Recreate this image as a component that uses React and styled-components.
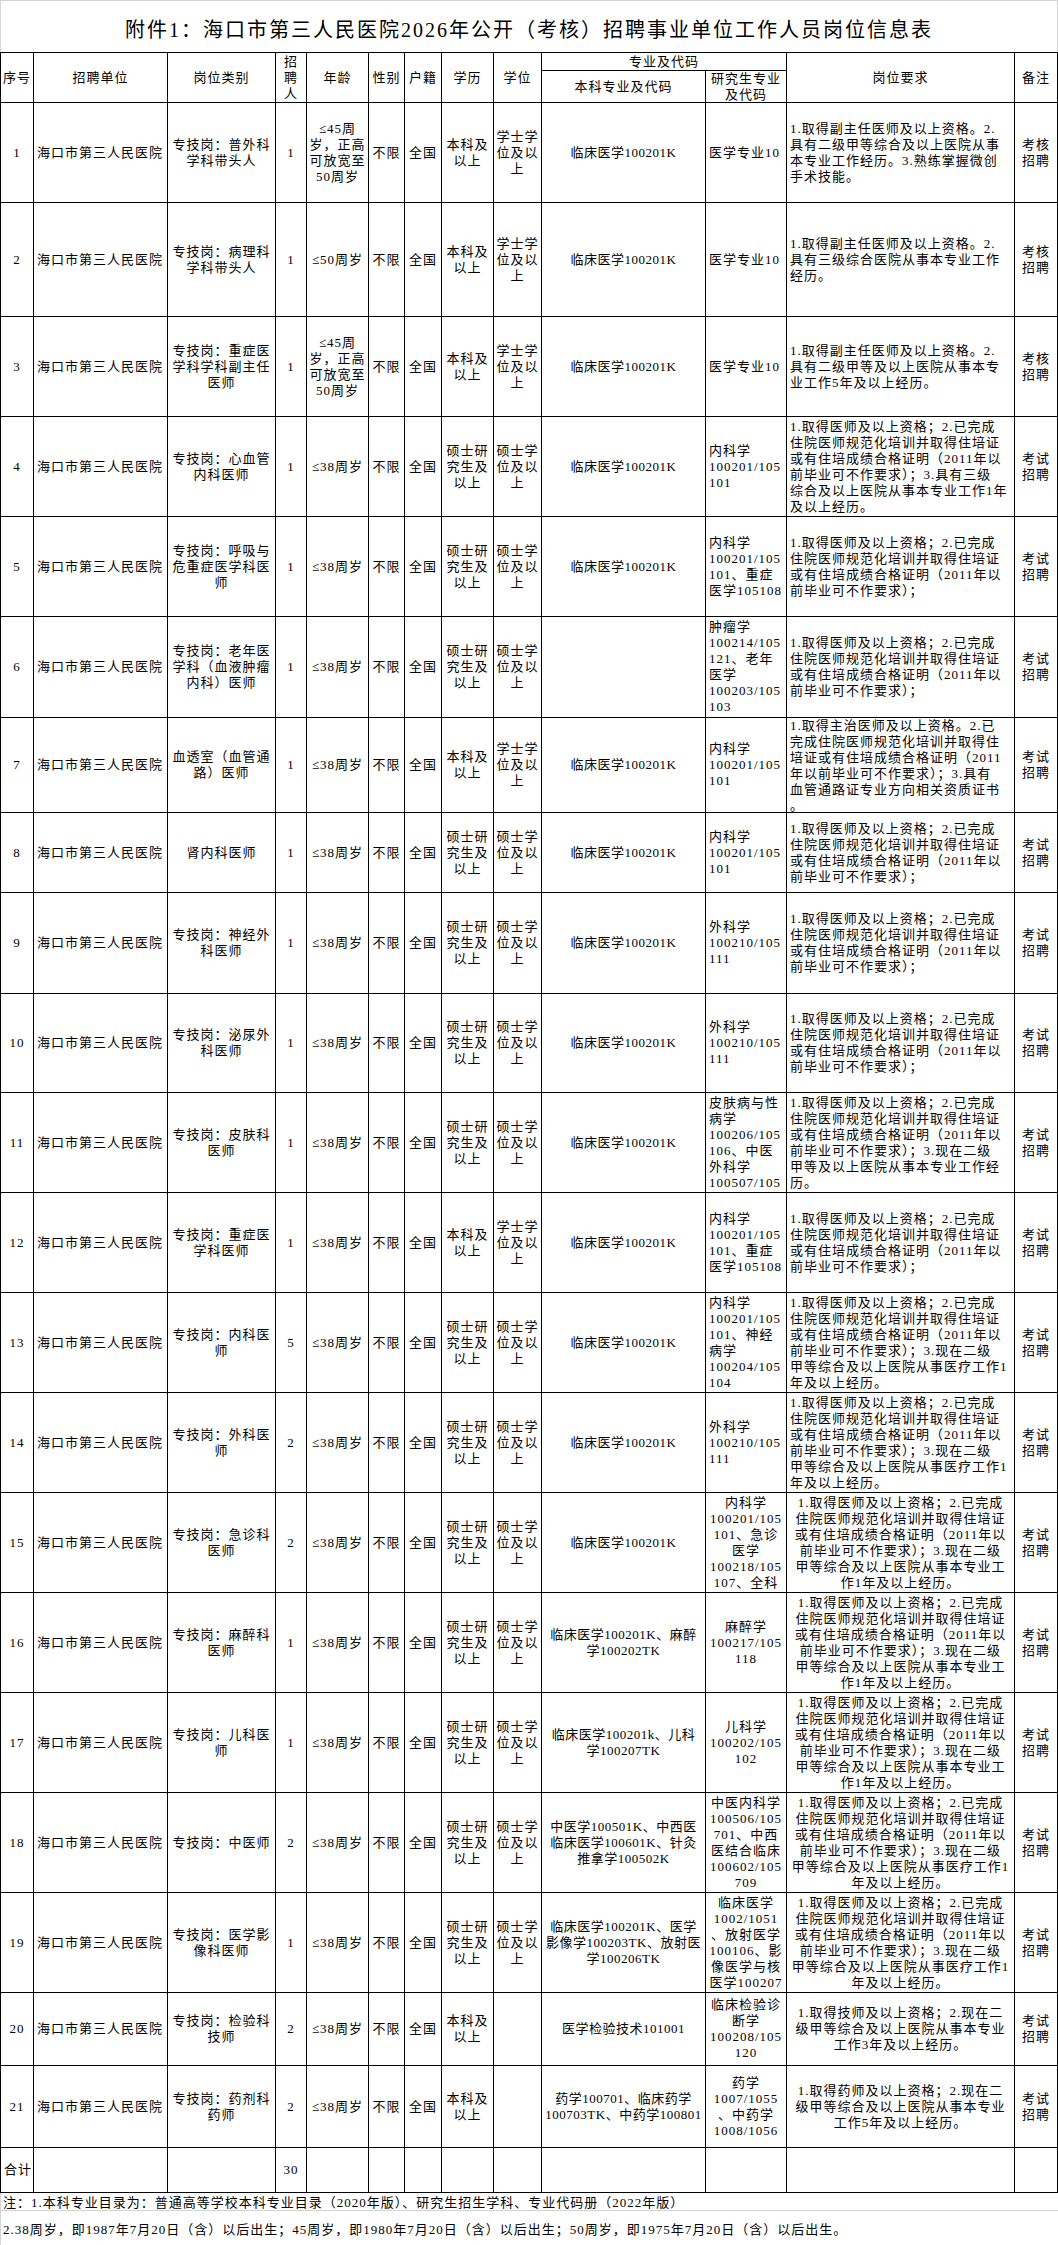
import React from 'react';
import styled, { createGlobalStyle } from 'styled-components';

const COLS = [33, 134, 108, 31, 62, 36, 37, 52, 48, 164, 81, 228, 43];

const GlobalStyle = createGlobalStyle`
  html, body {
    margin: 0;
    padding: 0;
    background: #fff;
  }
  body {
    width: 1058px;
    font-family: "Liberation Serif", "Noto Sans CJK SC", serif;
    color: #000;
  }
`;

const Page = styled.div`
  width: 1058px;
`;

const Title = styled.div`
  height: 52px;
  box-sizing: border-box;
  border: 1px solid #d4d4d4;
  border-bottom: none;
  display: flex;
  align-items: center;
  justify-content: center;
  padding-top: 4px;
  font-size: 20px;
  letter-spacing: 2px;
  white-space: nowrap;
`;

const Sheet = styled.div`
  display: grid;
  grid-template-columns: ${COLS.map(w => w + 'px').join(' ')};
  grid-template-rows: ${p => p.$rows};
  border-left: 1px solid #000;
  border-top: 1px solid #000;
`;

const Cell = styled.div`
  grid-row: span ${p => p.$rs || 1};
  grid-column: span ${p => p.$cs || 1};
  min-width: 0;
  min-height: 0;
  border-right: 1px solid #000;
  border-bottom: 1px solid #000;
  display: flex;
  flex-direction: column;
  justify-content: safe center;
  overflow: hidden;
  white-space: pre;
  text-align: ${p => (p.$left ? 'left' : 'center')};
  padding: 0 1px 0 ${p => (p.$left ? 3 : 1)}px;
  font-size: 13px;
  letter-spacing: ${p => (p.$tight ? 0.5 : 1)}px;
  line-height: 16px;
`;

const Note = styled.div`
  height: ${p => p.$h}px;
  box-sizing: border-box;
  border-left: 1px solid #d4d4d4;
  border-bottom: 1px solid #d4d4d4;
  display: flex;
  align-items: center;
  padding-left: 2px;
  font-size: 13px;
  letter-spacing: 1px;
  white-space: nowrap;
`;

const U = '海口市第三人民医院';
const MS = ['硕士研\n究生及\n以上', '硕士学\n位及以\n上'];
const BK = ['本科及\n以上', '学士学\n位及以\n上'];
const LC = '临床医学100201K';
const P3 = '1.取得医师及以上资格；2.已完成\n住院医师规范化培训并取得住培证\n或有住培成绩合格证明（2011年以\n';
const REQ_A = P3 + '前毕业可不作要求）；';
const REQ_MED = P3 + '前毕业可不作要求）；3.现在二级\n甲等综合及以上医院从事医疗工作1\n年及以上经历。';
const REQ_PRO = P3 + '前毕业可不作要求）；3.现在二级\n甲等综合及以上医院从事本专业工\n作1年及以上经历。';
const KS = '考试\n招聘';
const KH = '考核\n招聘';

// no, post, num, age, edu, degree, ug, pg, req, note, height, centered tail
const rows = [
  ['1', '专技岗：普外科\n学科带头人', '1', '≤45周\n岁，正高\n可放宽至\n50周岁', ...BK, LC, '医学专业10',
    '1.取得副主任医师及以上资格。2.\n具有二级甲等综合及以上医院从事\n本专业工作经历。3.熟练掌握微创\n手术技能。', KH, 100],
  ['2', '专技岗：病理科\n学科带头人', '1', '≤50周岁', ...BK, LC, '医学专业10',
    '1.取得副主任医师及以上资格。2.\n具有三级综合医院从事本专业工作\n经历。', KH, 114],
  ['3', '专技岗：重症医\n学科学科副主任\n医师', '1', '≤45周\n岁，正高\n可放宽至\n50周岁', ...BK, LC, '医学专业10',
    '1.取得副主任医师及以上资格。2.\n具有二级甲等及以上医院从事本专\n业工作5年及以上经历。', KH, 100],
  ['4', '专技岗：心血管\n内科医师', '1', '≤38周岁', ...MS, LC, '内科学\n100201/105\n101',
    P3 + '前毕业可不作要求）；3.具有三级\n综合及以上医院从事本专业工作1年\n及以上经历。', KS, 100],
  ['5', '专技岗：呼吸与\n危重症医学科医\n师', '1', '≤38周岁', ...MS, LC, '内科学\n100201/105\n101、重症\n医学105108', REQ_A, KS, 100],
  ['6', '专技岗：老年医\n学科（血液肿瘤\n内科）医师', '1', '≤38周岁', ...MS, '', '肿瘤学\n100214/105\n121、老年\n医学\n100203/105\n103', REQ_A, KS, 101],
  ['7', '血透室（血管通\n路）医师', '1', '≤38周岁', ...BK, LC, '内科学\n100201/105\n101',
    '1.取得主治医师及以上资格。2.已\n完成住院医师规范化培训并取得住\n培证或有住培成绩合格证明（2011\n年以前毕业可不作要求）；3.具有\n血管通路证专业方向相关资质证书\n。', KS, 95],
  ['8', '肾内科医师', '1', '≤38周岁', ...MS, LC, '内科学\n100201/105\n101', REQ_A, KS, 80],
  ['9', '专技岗：神经外\n科医师', '1', '≤38周岁', ...MS, LC, '外科学\n100210/105\n111', REQ_A, KS, 101],
  ['10', '专技岗：泌尿外\n科医师', '1', '≤38周岁', ...MS, LC, '外科学\n100210/105\n111', REQ_A, KS, 99],
  ['11', '专技岗：皮肤科\n医师', '1', '≤38周岁', ...MS, LC, '皮肤病与性\n病学\n100206/105\n106、中医\n外科学\n100507/105',
    P3 + '前毕业可不作要求）；3.现在二级\n甲等及以上医院从事本专业工作经\n历。', KS, 100],
  ['12', '专技岗：重症医\n学科医师', '1', '≤38周岁', ...BK, LC, '内科学\n100201/105\n101、重症\n医学105108', REQ_A, KS, 100],
  ['13', '专技岗：内科医\n师', '5', '≤38周岁', ...MS, LC, '内科学\n100201/105\n101、神经\n病学\n100204/105\n104', REQ_MED, KS, 100],
  ['14', '专技岗：外科医\n师', '2', '≤38周岁', ...MS, LC, '外科学\n100210/105\n111', REQ_MED, KS, 100],
  ['15', '专技岗：急诊科\n医师', '2', '≤38周岁', ...MS, LC, '内科学\n100201/105\n101、急诊\n医学\n100218/105\n107、全科', REQ_PRO, KS, 100, true],
  ['16', '专技岗：麻醉科\n医师', '1', '≤38周岁', ...MS, '临床医学100201K、麻醉\n学100202TK', '麻醉学\n100217/105\n118', REQ_PRO, KS, 100, true],
  ['17', '专技岗：儿科医\n师', '1', '≤38周岁', ...MS, '临床医学100201k、儿科\n学100207TK', '儿科学\n100202/105\n102', REQ_PRO, KS, 100, true],
  ['18', '专技岗：中医师', '2', '≤38周岁', ...MS, '中医学100501K、中西医\n临床医学100601K、针灸\n推拿学100502K', '中医内科学\n100506/105\n701、中西\n医结合临床\n100602/105\n709', REQ_MED, KS, 100, true],
  ['19', '专技岗：医学影\n像科医师', '1', '≤38周岁', ...MS, '临床医学100201K、医学\n影像学100203TK、放射医\n学100206TK', '临床医学\n1002/1051\n、放射医学\n100106、影\n像医学与核\n医学100207', REQ_MED, KS, 100, true],
  ['20', '专技岗：检验科\n技师', '2', '≤38周岁', '本科及\n以上', '', '医学检验技术101001', '临床检验诊\n断学\n100208/105\n120',
    '1.取得技师及以上资格；2.现在二\n级甲等综合及以上医院从事本专业\n工作3年及以上经历。', KS, 73, true],
  ['21', '专技岗：药剂科\n药师', '2', '≤38周岁', '本科及\n以上', '', '药学100701、临床药学\n100703TK、中药学100801', '药学\n1007/1055\n、中药学\n1008/1056',
    '1.取得药师及以上资格；2.现在二\n级甲等综合及以上医院从事本专业\n工作5年及以上经历。', KS, 82, true],
];

const heads = ['序号', '招聘单位', '岗位类别', '招\n聘\n人', '年龄', '性别', '户籍', '学历', '学位'];

const App = () => {
  const template = ['18px', '32px', ...rows.map(r => r[10] + 'px'), '45px'].join(' ');

  return (
    <Page>
      <GlobalStyle />
      <Title>附件1：海口市第三人民医院2026年公开（考核）招聘事业单位工作人员岗位信息表</Title>
      <Sheet $rows={template}>
        {heads.map(t => (
          <Cell key={t} $rs={2}>{t}</Cell>
        ))}
        <Cell $cs={2}>专业及代码</Cell>
        <Cell $rs={2}>岗位要求</Cell>
        <Cell $rs={2}>备注</Cell>
        <Cell>本科专业及代码</Cell>
        <Cell>{'研究生专业\n及代码'}</Cell>

        {rows.map(([no, post, num, age, edu, deg, ug, pg, req, note, , center]) => (
          <React.Fragment key={no}>
            <Cell>{no}</Cell>
            <Cell $left>{U}</Cell>
            <Cell>{post}</Cell>
            <Cell>{num}</Cell>
            <Cell>{age}</Cell>
            <Cell>不限</Cell>
            <Cell>全国</Cell>
            <Cell>{edu}</Cell>
            <Cell>{deg}</Cell>
            <Cell $tight>{ug}</Cell>
            <Cell $left={!center}>{pg}</Cell>
            <Cell $left={!center}>{req}</Cell>
            <Cell>{note}</Cell>
          </React.Fragment>
        ))}

        <Cell $left>合计</Cell>
        <Cell />
        <Cell />
        <Cell>30</Cell>
        {Array.from({ length: 9 }, (_, i) => (
          <Cell key={'t' + i} />
        ))}
      </Sheet>
      <Note $h={18}>注：1.本科专业目录为：普通高等学校本科专业目录（2020年版）、研究生招生学科、专业代码册（2022年版）</Note>
      <Note $h={35}>2.38周岁，即1987年7月20日（含）以后出生；45周岁，即1980年7月20日（含）以后出生；50周岁，即1975年7月20日（含）以后出生。</Note>
    </Page>
  );
};

export default App;
